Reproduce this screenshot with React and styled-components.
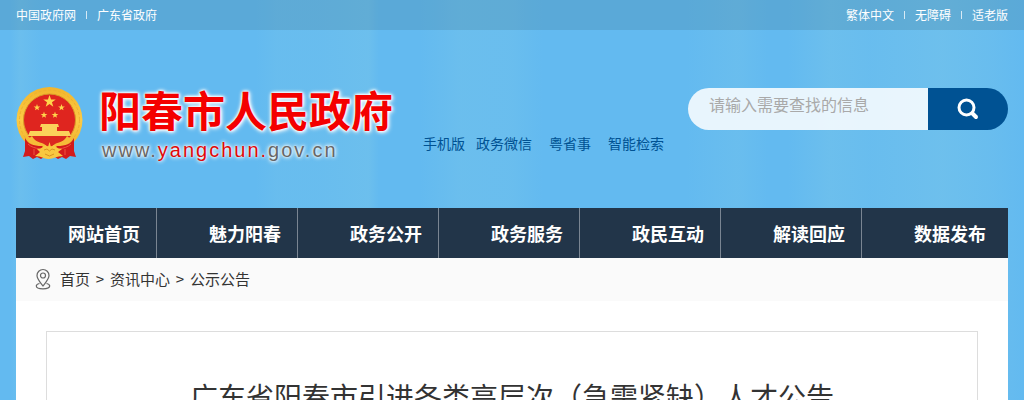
import React from "react";
import styled, { createGlobalStyle } from "styled-components";

const GlobalStyle = createGlobalStyle`
  * { box-sizing: border-box; }
  body {
    margin: 0;
    font-family: "Noto Sans CJK SC", "Liberation Sans", sans-serif;
    color: #333;
  }
  a { color: inherit; text-decoration: none; }
`;

const Page = styled.div`
  height: 100vh;
  overflow: hidden;
  background:
    linear-gradient(90deg, transparent 0 1%, rgba(125, 200, 232, 0.3) 2%, transparent 4% 25%, rgba(125, 200, 232, 0.2) 27%, rgba(125, 200, 232, 0.2) 31%, rgba(125, 200, 232, 0.35) 36%, transparent 37% 41%, rgba(125, 200, 232, 0.3) 45%, rgba(125, 200, 232, 0.25) 50%, transparent 53% 67%, rgba(125, 200, 232, 0.25) 72%, transparent 75% 77%, rgba(125, 200, 232, 0.35) 81%, rgba(125, 200, 232, 0.2) 85%, rgba(125, 200, 232, 0.4) 92%, rgba(125, 200, 232, 0.2) 97%, transparent),
    #63baf0;
`;

const TopBar = styled.div`
  display: flex;
  justify-content: space-between;
  height: 30px;
  padding: 0 16px;
  background: rgba(60, 110, 130, 0.22);
  color: #fff;
  font-size: 12px;
  line-height: 30px;
`;

const TopGroup = styled.nav`
  display: flex;
  align-items: center;
  gap: 10px;
`;

const Divider = styled.span`
  width: 1px;
  height: 8px;
  background: rgba(255, 255, 255, 0.75);
`;

const Header = styled.header`
  display: flex;
  align-items: flex-start;
  height: 178px;
  padding: 56px 16px 0;
`;

const Brand = styled.a`
  display: flex;
  gap: 16px;
`;

const Emblem = styled.svg`
  flex: none;
  width: 67px;
  height: 75px;
`;

const BrandName = styled.span`
  display: block;
  color: #f40000;
  font-size: 42px;
  font-weight: 700;
  line-height: 46px;
  white-space: nowrap;
  text-shadow: 0 0 2px #fff, 0 0 3px #fff, 0 0 4px #fff, 1px 1px 5px #fff;
`;

const BrandUrl = styled.span`
  display: block;
  padding-left: 3px;
  color: #666;
  font-family: "Liberation Sans", sans-serif;
  font-size: 20px;
  letter-spacing: 2px;
  line-height: 36px;
  text-shadow: 0 0 2px #fff, 0 0 4px #fff, 0 0 5px #fff;
  em { color: #e00808; font-style: normal; }
`;

const QuickLinks = styled.nav`
  display: flex;
  gap: 17px;
  margin: 47px 0 0 30px;
  color: #005293;
  font-size: 14px;
  line-height: 20px;
  white-space: nowrap;
`;

const QuickPair = styled.span`
  display: flex;
  gap: 11px;
`;

const Search = styled.form`
  display: flex;
  width: 320px;
  height: 42px;
  margin: 2px 0 0 auto;
  border-radius: 21px;
  overflow: hidden;
`;

const SearchInput = styled.input`
  flex: 1;
  min-width: 0;
  padding: 0 20px 10px 21px;
  border: 0;
  outline: 0;
  border-radius: 0;
  background: rgba(255, 255, 255, 0.85);
  color: #333;
  font-family: inherit;
  font-size: 16px;
  &::placeholder { color: #a9a9a9; opacity: 1; }
`;

const SearchButton = styled.button`
  display: flex;
  align-items: center;
  justify-content: center;
  width: 80px;
  padding: 0;
  border: 0;
  background: #005293;
  color: #fff;
  cursor: pointer;
`;

const Main = styled.main`
  margin: 0 16px;
  min-height: 100vh;
  background: #fff;
`;

const NavBar = styled.nav`
  display: flex;
  height: 50px;
  background: #223549;
`;

const NavLink = styled.a`
  flex: ${(p) => (p.$last ? "1" : "0 0 calc((100% - 5px) / 7)")};
  padding-left: 52px;
  border-right: ${(p) => (p.$last ? "0" : "1px solid #7a8592")};
  color: #fff;
  font-size: 18px;
  font-weight: 700;
  line-height: 50px;
  white-space: nowrap;
`;

const Crumbs = styled.nav`
  display: flex;
  align-items: center;
  height: 43px;
  padding: 0 0 1px 19px;
  background: #fafafa;
  font-size: 15px;
  line-height: 22px;
`;

const Pin = styled.svg`
  width: 16px;
  height: 22px;
  margin-right: 9px;
`;

const CrumbMark = styled.span`
  width: 20px;
  text-align: center;
`;

const Article = styled.article`
  margin: 30px;
  padding: 43px 30px;
  border: 1px solid #ddd;
`;

const Title = styled.h1`
  margin: 0;
  font-size: 28px;
  font-weight: 400;
  line-height: 42px;
  text-align: center;
`;

const starPath = "M0-5 1.2-1.6 4.8-1.5 1.9.6 2.9 4 0 2-2.9 4-1.9.6-4.8-1.5-1.2-1.6Z";

const stars = [
  { x: 33.5, y: 15.5, s: 1.3 },
  { x: 21, y: 21.5, s: 0.7 },
  { x: 45.5, y: 21.5, s: 0.7 },
  { x: 28, y: 29, s: 0.7 },
  { x: 39, y: 29, s: 0.7 },
];

function NationalEmblem() {
  return (
    <Emblem viewBox="0 0 67 75" aria-hidden="true">
      <defs>
        <linearGradient id="gold" x1="0" y1="0" x2="0" y2="1">
          <stop offset="0" stopColor="#f2b52c" />
          <stop offset=".5" stopColor="#fccb45" />
          <stop offset="1" stopColor="#edac27" />
        </linearGradient>
      </defs>
      <circle cx="33.5" cy="34" r="33" fill="url(#gold)" />
      <circle cx="33.5" cy="34" r="30" fill="none" stroke="#efb030" strokeWidth="1" strokeDasharray="3 2" />
      <circle cx="33.5" cy="34" r="26" fill="#df251f" stroke="#d99a28" />
      {stars.map((s) => (
        <path key={s.x} d={starPath} fill="#ffd44b" transform={`translate(${s.x} ${s.y}) scale(${s.s})`} />
      ))}
      <path d="M25 38h17l1 3h-2v4h3v2H23v-2h3v-4h-2ZM14 45h39l2 5H12Z" fill="#fbd25a" />
      <path d="M12 50h43L44 60H23Z" fill="#dc2820" />
      <path d="M16 50c3 6 8 6 12 8l5.500 4 5.500-4c4-2 9-2 12-8l5 4-13 12H24L11 54Z" fill="#f6bd38" />
      <path d="M9 52c3 6 8 8 17 8l3 3-3 4 2 4-3 2-4-2-4 2-4-3-6 1 2-6ZM58 52c-3 6-8 8-17 8l-3 3 3 4-2 4 3 2 4-2 4 2 4-3 6 1-2-6Z" fill="#d31b1b" />
      <path d="M12 58c3 3 7 4 12 5M18 63v6M55 58c-3 3-7 4-12 5M49 63v6" fill="none" stroke="#ef5540" />
      <path d="M21 63c4 0 6-2 8-4l3 2 1.500-5 1.500 5 3-2c2 2 4 4 8 4l-4 3 5 4c-7 0-9 3-14.500 3S26 70 19 70l5-4Z" fill="#f9c840" />
      <path d="m28 64 3-1 2.500 2 2.500-2 3 1M29 68l4.500 2 4.500-2" fill="none" stroke="#d99321" />
    </Emblem>
  );
}

const navItems = ["网站首页", "魅力阳春", "政务公开", "政务服务", "政民互动", "解读回应", "数据发布"];

export default function App() {
  return (
    <Page>
      <GlobalStyle />
      <TopBar>
        <TopGroup>
          <a href="#china">中国政府网</a>
          <Divider />
          <a href="#guangdong">广东省政府</a>
        </TopGroup>
        <TopGroup>
          <a href="#traditional">繁体中文</a>
          <Divider />
          <a href="#accessible">无障碍</a>
          <Divider />
          <a href="#senior">适老版</a>
        </TopGroup>
      </TopBar>
      <Header>
        <Brand href="#home">
          <NationalEmblem />
          <span>
            <BrandName>阳春市人民政府</BrandName>
            <BrandUrl>www.<em>yangchun.</em>gov.cn</BrandUrl>
          </span>
        </Brand>
        <QuickLinks>
          <QuickPair>
            <a href="#mobile">手机版</a>
            <a href="#wechat">政务微信</a>
          </QuickPair>
          <a href="#yss">粤省事</a>
          <a href="#smart">智能检索</a>
        </QuickLinks>
        <Search onSubmit={(e) => e.preventDefault()}>
          <SearchInput type="text" aria-label="搜索" placeholder="请输入需要查找的信息" />
          <SearchButton type="submit" aria-label="搜索">
            <svg width="22" height="22" viewBox="0 0 22 22" fill="none" stroke="currentColor" strokeLinecap="round">
              <circle cx="9.500" cy="9.500" r="7.500" strokeWidth="3" />
              <path d="m15.500 15.500 3.500 3.500" strokeWidth="4" />
            </svg>
          </SearchButton>
        </Search>
      </Header>
      <Main>
        <NavBar>
          {navItems.map((label, i) => (
            <NavLink key={label} href="#nav" $last={i === navItems.length - 1}>{label}</NavLink>
          ))}
        </NavBar>
        <Crumbs>
          <Pin viewBox="0 0 16 22" fill="none" stroke="#666" strokeWidth="1.200" aria-hidden="true">
            <path d="M8 18C5 14 2 11 2 7.500a6 6 0 0 1 12 0C14 11 11 14 8 18Z" />
            <circle cx="8" cy="7.500" r="2.500" />
            <path d="M4.500 15.500C2.500 16 1.300 17 1.300 18c0 1.700 3 2.800 6.700 2.800s6.700-1.100 6.700-2.800c0-1-1.200-2-3.200-2.500" />
          </Pin>
          <a href="#home">首页</a>
          <CrumbMark>&gt;</CrumbMark>
          <a href="#news">资讯中心</a>
          <CrumbMark>&gt;</CrumbMark>
          <a href="#notice">公示公告</a>
        </Crumbs>
        <Article>
          <Title>广东省阳春市引进各类高层次（急需紧缺）人才公告</Title>
        </Article>
      </Main>
    </Page>
  );
}
